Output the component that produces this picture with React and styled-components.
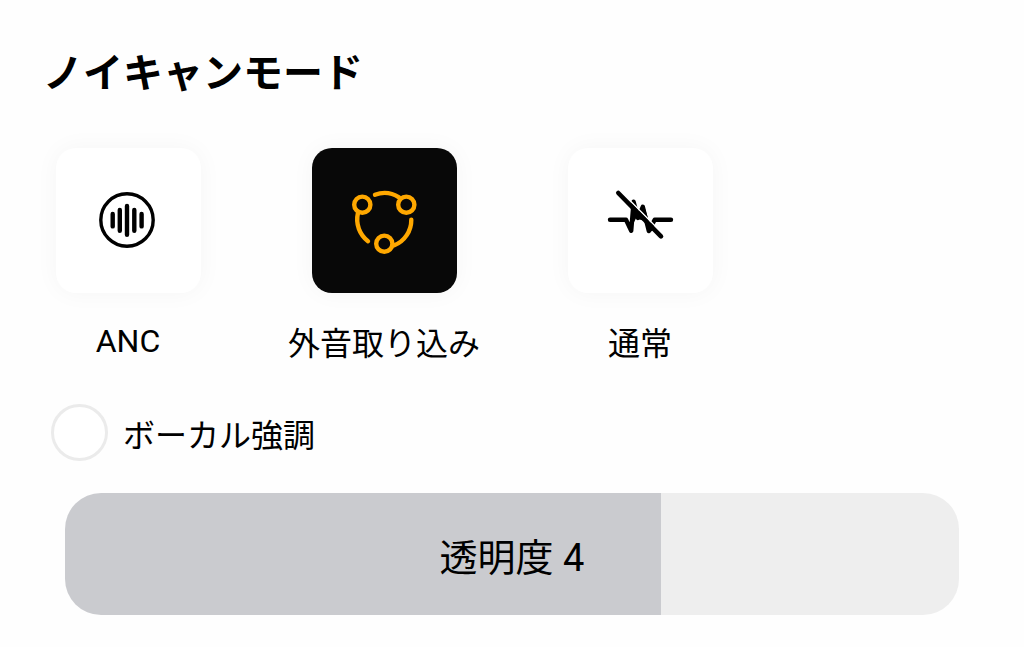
import React, { useState } from 'react';
import styled, { createGlobalStyle } from 'styled-components';

const GlobalStyle = createGlobalStyle`
  * {
    box-sizing: border-box;
  }

  body {
    margin: 0;
    background: #fefefe;
    color: #000;
    font-family: Roboto, "Noto Sans CJK JP", sans-serif;
  }
`;

const Panel = styled.main`
  padding: 41px 0 32px;
`;

const Title = styled.h1`
  margin: 0 43px;
  font-size: 40px;
  font-weight: 700;
`;

const ModeList = styled.div`
  display: grid;
  grid-template-columns: repeat(4, 1fr);
  margin-top: 49px;
`;

const ModeButton = styled.button`
  display: flex;
  flex-direction: column;
  align-items: center;
  gap: 24px;
  padding: 0;
  border: 0;
  background: none;
  color: inherit;
  font: inherit;
  cursor: pointer;
`;

const ModeCard = styled.span`
  display: flex;
  align-items: center;
  justify-content: center;
  width: 145px;
  height: 145px;
  border-radius: 20px;
  background: ${({ $active }) => ($active ? '#080808' : '#fff')};
  color: ${({ $active }) => ($active ? '#ffa800' : '#000')};
  box-shadow: 0 0 24px rgba(0, 0, 0, 0.04);
`;

const ModeLabel = styled.span`
  display: flex;
  align-items: center;
  height: 48px;
  font-size: 32px;
  white-space: nowrap;
`;

const Icon = styled.svg`
  width: 73px;
  height: 73px;
  fill: none;
  stroke: currentColor;
  stroke-width: 4.4;
  stroke-linecap: round;
  stroke-linejoin: round;
`;

const VocalRow = styled.label`
  display: flex;
  align-items: center;
  gap: 15px;
  width: fit-content;
  margin: 39px 51px 0;
  font-size: 32px;
  cursor: pointer;
`;

const RoundCheckbox = styled.input`
  appearance: none;
  width: 57px;
  height: 57px;
  margin: 0;
  border: 3px solid #ebebeb;
  border-radius: 50%;
  background: #fff;

  &:checked {
    background: #ffa800;
  }
`;

const Slider = styled.div`
  display: grid;
  align-items: center;
  margin: 32px 65px 0;
`;

const SliderInput = styled.input`
  appearance: none;
  grid-area: 1 / 1;
  width: 100%;
  height: 122px;
  margin: 0;
  border-radius: 36px;
  background: linear-gradient(
    to right,
    #cacbcf var(--level),
    #eeeeee var(--level)
  );
  cursor: pointer;

  &::-webkit-slider-thumb {
    appearance: none;
    width: 1px;
    height: 122px;
    background: transparent;
  }
`;

const SliderLabel = styled.label`
  grid-area: 1 / 1;
  z-index: 1;
  font-size: 38px;
  text-align: center;
  pointer-events: none;
`;

const AncIcon = () => (
  <Icon viewBox="0 0 73 73" aria-hidden="true">
    <circle cx="35" cy="36" r="26.2" strokeWidth="3.4" />
    <path d="M20.7 30v12.4M27.8 26v20.8M35 22v28.8M42.3 26v20.8M49.6 30v12.4" />
  </Icon>
);

const AmbientIcon = () => (
  <Icon viewBox="0 0 73 73" aria-hidden="true">
    <circle cx="14.3" cy="20.7" r="8.1" />
    <circle cx="58.3" cy="20.7" r="8.1" />
    <circle cx="36.3" cy="59.7" r="8.1" />
    <path d="M27 10.7A27.3 27.3 0 0 1 51 13.3" />
    <path d="M9.9 29.3A27.3 27.3 0 0 0 20 57.2" />
    <path d="M63.3 35.7A27.3 27.3 0 0 1 46.3 61.3" />
  </Icon>
);

const NormalIcon = () => (
  <Icon viewBox="0 0 73 73" aria-hidden="true">
    <path d="M6 35.7H22L27.2 46.8L29.6 17.8L34 34L38.8 22.8L44.8 47L50.7 35.7H67" />
    <path d="M38.8 22.8L36 34L43 36Z" fill="currentColor" strokeWidth="3" />
    <path d="M29 22L28 40L33 30Z" fill="currentColor" strokeWidth="2" />
    <path d="M43 40L45 48L50 44Z" fill="currentColor" strokeWidth="2" />
    <path d="M16.5 7L59.2 50.3" stroke="#fff" strokeWidth="1.6" strokeLinecap="butt" />
    <path d="M14.3 9L57 52.3" strokeWidth="4.6" />
  </Icon>
);

const MODES = [
  { id: 'anc', label: 'ANC', icon: AncIcon },
  { id: 'ambient', label: '外音取り込み', icon: AmbientIcon },
  { id: 'normal', label: '通常', icon: NormalIcon },
];

const MAX_LEVEL = 6;

const App = () => {
  const [mode, setMode] = useState('ambient');
  const [vocal, setVocal] = useState(false);
  const [level, setLevel] = useState(4);

  return (
    <>
      <GlobalStyle />
      <Panel lang="ja">
        <Title>ノイキャンモード</Title>
        <ModeList>
          {MODES.map(({ id, label, icon: ModeIcon }) => (
            <ModeButton
              key={id}
              type="button"
              aria-pressed={mode === id}
              onClick={() => setMode(id)}
            >
              <ModeCard $active={mode === id}>
                <ModeIcon />
              </ModeCard>
              <ModeLabel>{label}</ModeLabel>
            </ModeButton>
          ))}
        </ModeList>
        <VocalRow>
          <RoundCheckbox
            type="checkbox"
            checked={vocal}
            onChange={(event) => setVocal(event.target.checked)}
          />
          ボーカル強調
        </VocalRow>
        <Slider>
          <SliderInput
            id="level"
            type="range"
            min="0"
            max={MAX_LEVEL}
            value={level}
            style={{ '--level': `${(level / MAX_LEVEL) * 100}%` }}
            onChange={(event) => setLevel(Number(event.target.value))}
          />
          <SliderLabel htmlFor="level">透明度 {level}</SliderLabel>
        </Slider>
      </Panel>
    </>
  );
};

export default App;
